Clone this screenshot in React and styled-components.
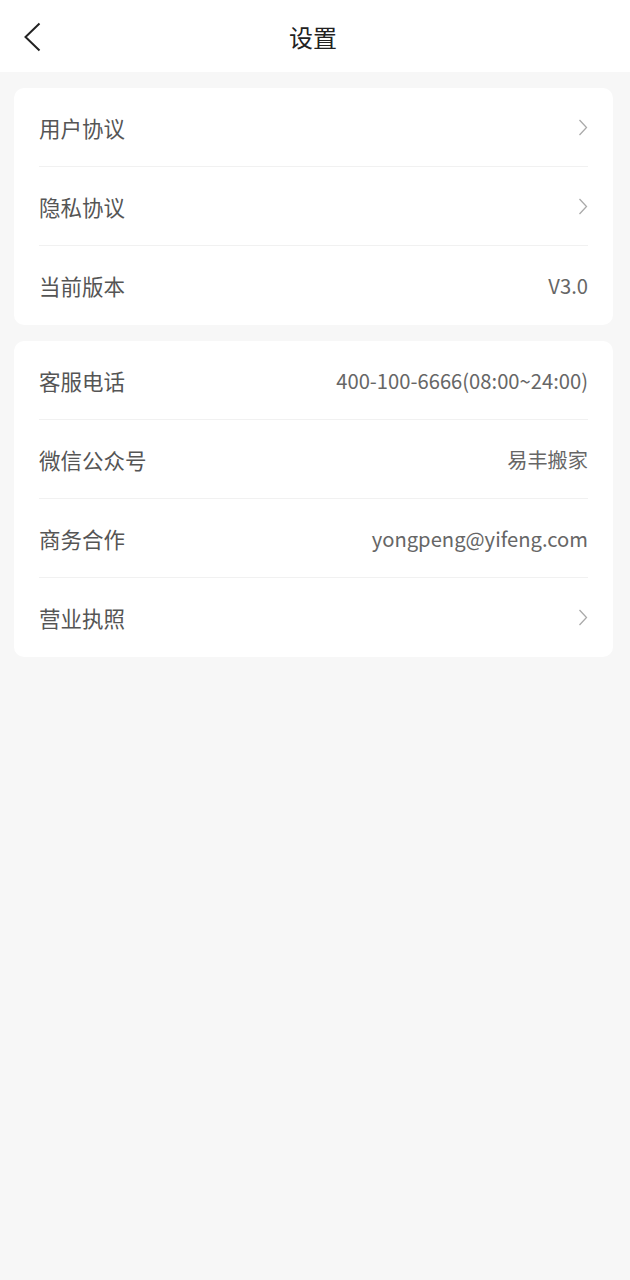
import styled, { createGlobalStyle } from 'styled-components';

const Global = createGlobalStyle`
body{
margin: 0;
background: #f7f7f7;
font-family: 'Noto Sans CJK SC', 'Noto Sans', sans-serif;
}
`

const groups = [
    [
        { label: '用户协议', arrow: true },
        { label: '隐私协议', arrow: true },
        { label: '当前版本', value: 'V3.0' },
    ],
    [
        { label: '客服电话', value: '400-100-6666(08:00~24:00)' },
        { label: '微信公众号', value: '易丰搬家' },
        { label: '商务合作', value: 'yongpeng@yifeng.com' },
        { label: '营业执照', arrow: true },
    ],
]

function Chevron() {
    return (
        <svg width="10" height="17" viewBox="0 0 10 17">
            <path d="M1.5 1 L8.5 8.5 L1.5 16" fill="none" stroke="#aaa" strokeWidth="1.3" />
        </svg>
    )
}

export default function App() {
    return (
        <>
            <Global />
            <Page>
                <Header>
                    <BackButton>
                        <svg width="18" height="30" viewBox="0 0 18 30">
                            <path d="M16.5 1.5 L2.5 15 L16.5 28.5" fill="none" stroke="#222" strokeWidth="2" />
                        </svg>
                    </BackButton>
                    <Title>设置</Title>
                </Header>
                <Content>
                    {groups.map((group, i) => (
                        <Card key={i}>
                            {group.map(item => (
                                <Row key={item.label}>
                                    <Label>{item.label}</Label>
                                    {item.value && <Value>{item.value}</Value>}
                                    {item.arrow && <Chevron />}
                                </Row>
                            ))}
                        </Card>
                    ))}
                </Content>
            </Page>
        </>
    )
}

const Page = styled.div`
min-height: 1280px;
background: #f7f7f7;
`
const Header = styled.div`
position: relative;
display: flex;
align-items: center;
justify-content: center;
height: 72px;
padding-right: 4px;
background: #fff;
`
const BackButton = styled.div`
position: absolute;
left: 23px;
top: 22px;
display: flex;
`
const Title = styled.h1`
margin: 0;
font-size: 24px;
font-weight: 400;
color: #222;
`
const Content = styled.div`
display: flex;
flex-direction: column;
gap: 16px;
padding: 16px 17px 16px 14px;
`
const Card = styled.div`
background: #fff;
border-radius: 10px;
padding: 0 25px;
`
const Row = styled.div`
box-sizing: border-box;
display: flex;
align-items: center;
justify-content: space-between;
height: 79px;
border-bottom: 1px solid #f1f1f1;

&:last-child{
border-bottom: none;
}
`
const Label = styled.span`
font-size: 21.5px;
color: #555;
`
const Value = styled.span`
font-size: 20.2px;
color: #666;
`
